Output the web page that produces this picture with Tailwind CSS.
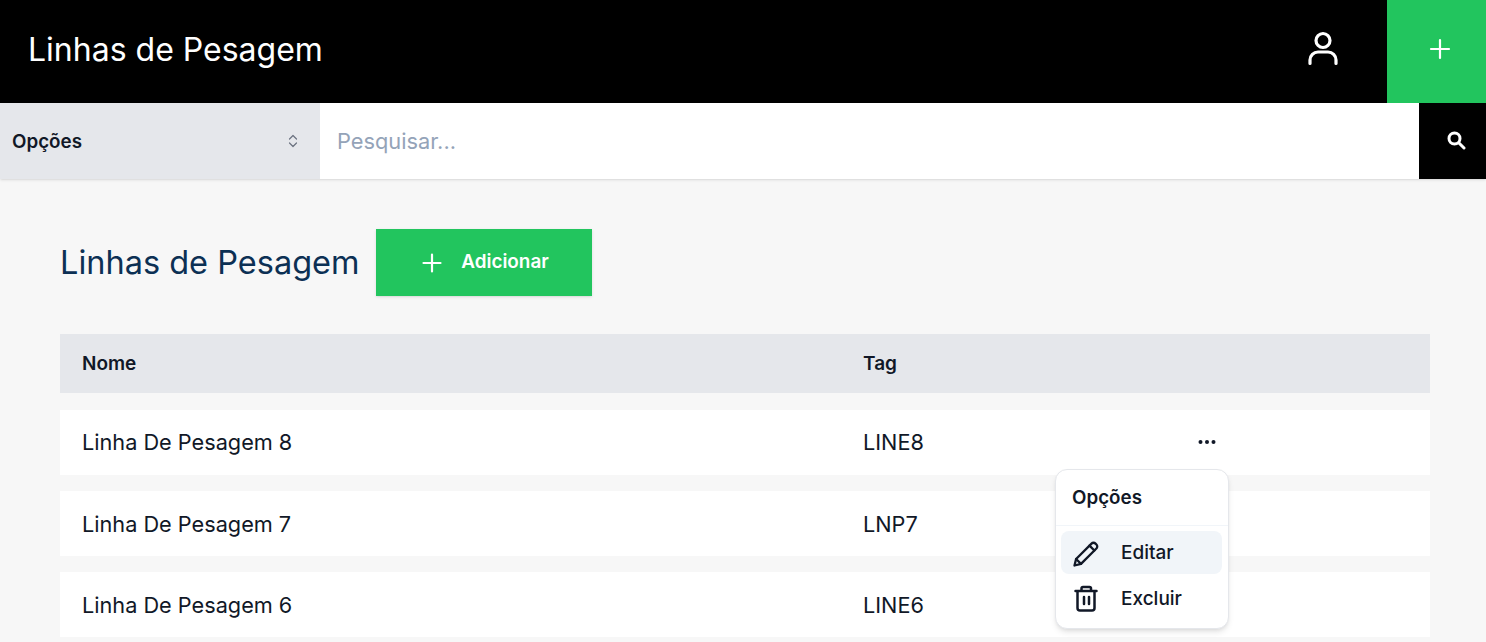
<!DOCTYPE html>
<html lang="pt">
<head>
<meta charset="utf-8">
<title>Linhas de Pesagem</title>
<script src="https://cdn.jsdelivr.net/npm/@tailwindcss/browser@4"></script>
</head>
<body class="m-0 h-[642px] overflow-hidden bg-[#f7f7f7] font-['Inter',sans-serif] text-[#111827]">
<header class="flex h-[103px] items-center bg-black">
  <h1 class="mb-1 ml-7 flex-1 text-[32px] font-normal text-white">Linhas de Pesagem</h1>
  <svg class="mb-[5px] mr-[46px] h-9 w-9" viewBox="0 0 36 36" fill="none" stroke="white" stroke-width="3.2" stroke-linecap="round"><circle cx="18" cy="9.500" r="7"/><path d="M5 32.500v-3.500a8 8 0 0 1 8-8h10a8 8 0 0 1 8 8v3.500"/></svg>
  <div class="flex h-[103px] w-[99px] items-center justify-center bg-[#22c55e] pb-[6px] pl-[7px]">
    <svg class="h-6 w-6" viewBox="0 0 24 24" fill="none" stroke="white" stroke-width="2.200" stroke-linecap="round"><path d="M12 3v18M3 12h18"/></svg>
  </div>
</header>
<div class="flex h-[76px] shadow-sm">
  <div class="flex w-[320px] items-center justify-between bg-[#e5e7eb] pl-3 pr-[19px]">
    <span class="pt-[2px] text-[18.800px] font-semibold">Opções</span>
    <svg class="h-4 w-4" viewBox="0 0 16 16" fill="none" stroke="#6b7280" stroke-width="1.200" stroke-linecap="round" stroke-linejoin="round"><path d="M4.500 6 8 2.500 11.500 6M4.500 10 8 13.500 11.500 10"/></svg>
  </div>
  <div class="flex flex-1 items-center bg-white pl-[17px] text-[21.800px] text-[#94a3b8]">Pesquisar...</div>
  <div class="flex w-[67px] items-center justify-center bg-black pb-[2px] pl-[6px]">
    <svg class="h-5 w-5" viewBox="0 0 20 20" fill="none" stroke="white" stroke-width="3" stroke-linecap="round"><circle cx="8.500" cy="8.500" r="5.500"/><path d="m13 13 5 5"/></svg>
  </div>
</div>
<main class="relative pl-[60px] pr-[56px] pt-[50px]">
  <div class="flex items-center gap-[17px]">
    <h2 class="pt-[2px] text-[32.500px] font-normal text-[#0c3054]">Linhas de Pesagem</h2>
    <button class="flex h-[67px] w-[216px] items-center justify-center gap-[17px] bg-[#22c55e] text-[18.900px] font-semibold text-white shadow-sm">
      <svg class="h-6 w-6" viewBox="0 0 24 24" fill="none" stroke="white" stroke-width="2.200" stroke-linecap="round"><path d="M12 3.500v17M3.500 12h17"/></svg>
      Adicionar
    </button>
  </div>
  <div class="mt-[38px] flex h-[59px] items-center bg-[#e5e7eb] pl-[22px] pt-[2px] text-[19px] font-semibold">
    <span class="w-[781px]">Nome</span><span>Tag</span>
  </div>
  <div class="mt-[17px] flex h-[65px] items-center bg-white pl-[22px] text-[21.700px]">
    <span class="w-[781px]">Linha De Pesagem 8</span><span class="w-[334px]">LINE8</span>
    <svg class="mb-[2px] h-5 w-5" viewBox="0 0 20 20" fill="#111827"><circle cx="3.500" cy="10" r="2"/><circle cx="10" cy="10" r="2"/><circle cx="16.500" cy="10" r="2"/></svg>
  </div>
  <div class="mt-4 flex h-[65px] items-center bg-white pl-[22px] pt-[2px] text-[21.700px]">
    <span class="w-[781px]">Linha De Pesagem 7</span><span>LNP7</span>
  </div>
  <div class="mt-4 flex h-[65px] items-center bg-white pl-[22px] pt-[2px] text-[21.700px]">
    <span class="w-[781px]">Linha De Pesagem 6</span><span>LINE6</span>
  </div>
  <div class="absolute left-[1055px] top-[290px] h-[160px] w-[174px] rounded-xl border border-[#e5e7eb] bg-white shadow-md">
    <div class="flex h-[56px] items-center border-b border-[#f1f5f9] pl-[16px] pt-[2px] text-[18.800px] font-semibold">Opções</div>
    <div class="pl-[5px] pr-[6px] pt-[5px]">
      <div class="flex h-[43px] items-center gap-[21px] rounded-lg bg-[#f1f5f9] pl-[11px] pt-[1px] text-[19px] font-medium">
        <svg class="h-7 w-7" viewBox="0 0 28 28" fill="none" stroke="#111827" stroke-width="2.300" stroke-linecap="round" stroke-linejoin="round"><path d="M2.500 26.500l1.600-6.500L19.500 4.600a2.800 2.800 0 0 1 4 0l.9.9a2.800 2.800 0 0 1 0 4L9 24.900z"/><path d="M4.100 20l4.900 4.900M17.500 6.600l4.900 4.900"/></svg>
        Editar
      </div>
      <div class="mt-[3px] flex h-[43px] items-center gap-[21px] pl-[11px] pt-[1px] text-[19px] font-medium">
        <svg class="h-7 w-7" viewBox="0 0 28 28" fill="none" stroke="#111827" stroke-width="2.500" stroke-linecap="round" stroke-linejoin="round"><path d="M3.500 6h21M9.500 6V3.500a1.500 1.500 0 0 1 1.500-1.500h6.500a1.500 1.500 0 0 1 1.500 1.500V6M5.500 6v17a2.500 2.500 0 0 0 2.500 2.500h12a2.500 2.500 0 0 0 2.500-2.500V6M12 12v7M17 12v7"/></svg>
        Excluir
      </div>
    </div>
  </div>
</main>
</body>
</html>
